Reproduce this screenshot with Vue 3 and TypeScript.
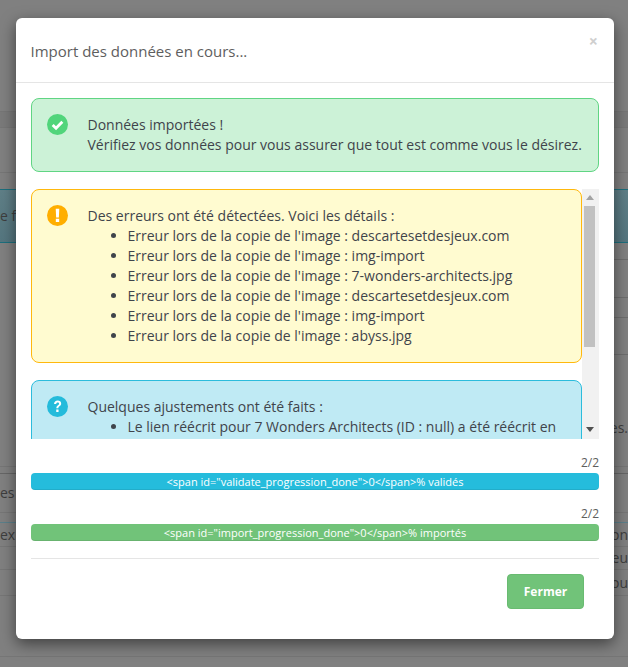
<script setup lang="ts">
interface BgRow {
  h: number
  kind?: string
  left?: string
  right?: string
}

const errors: string[] = [
  'descartesetdesjeux.com',
  'img-import',
  '7-wonders-architects.jpg',
  'descartesetdesjeux.com',
  'img-import',
  'abyss.jpg',
]

const rows: BgRow[] = [
  { h: 112 },
  { h: 16, kind: 'dark' },
  { h: 45 },
  { h: 16, kind: 'plain' },
  { h: 54, kind: 'band', left: 'e f' },
  { h: 17, kind: 'right-line' },
  { h: 38, kind: 'right-line' },
  { h: 20, kind: 'right-line' },
  { h: 37, kind: 'right-line' },
  { h: 112, kind: 'low', right: 'es.' },
  { h: 7, kind: 'heavy' },
  { h: 39, left: 'es e' },
  { h: 10, kind: 'teal' },
  { h: 24, left: 'ex', right: 'tion' },
  { h: 23, right: 'eu' },
  { h: 26, right: 'jou' },
  { h: 61 },
]
</script>

<template>
  <div class="page">
    <div class="backdrop">
      <div
        v-for="(row, i) in rows"
        :key="i"
        class="bg-row"
        :class="row.kind"
        :style="{ height: row.h + 'px' }"
      >
        <span>{{ row.left }}</span>
        <span>{{ row.right }}</span>
      </div>
    </div>
    <main class="modal">
      <header class="head">
        <h4>Import des données en cours...</h4>
        <span class="close">×</span>
      </header>
      <div class="body">
        <section class="alert success first">
          <svg class="icon" viewBox="0 0 20 20"><circle cx="10" cy="10" r="10" fill="#51d57b" /><path d="M5.4 10.4l3.2 3.2 6-6.2" fill="none" stroke="#fff" stroke-width="2.7" /></svg>
          <p>Données importées !<br />Vérifiez vos données pour vous assurer que tout est comme vous le désirez.</p>
        </section>
        <div class="scroll">
          <div class="scroll-content">
            <section class="alert warning">
              <svg class="icon" viewBox="0 0 20 20"><circle cx="10" cy="10" r="10" fill="#ffae00" /><path d="M8.3 3.6h3.4l-.4 8.2H8.7zM8.4 13.2h3.2v3.1H8.4z" fill="#fff" /></svg>
              <div class="copy">
                Des erreurs ont été détectées. Voici les détails :
                <ul>
                  <li v-for="(name, i) in errors" :key="i">Erreur lors de la copie de l'image : {{ name }}</li>
                </ul>
              </div>
            </section>
            <section class="alert info">
              <svg class="icon" viewBox="0 0 20 20"><circle cx="10" cy="10" r="10" fill="#24bbdb" /><path d="M6.7 7.6c.1-2 1.5-3.2 3.5-3.2 1.9 0 3.3 1.1 3.3 2.8 0 2.6-2.7 2.5-2.7 4.5H8.9c0-3 2.6-3 2.6-4.4 0-.7-.5-1.2-1.3-1.2-.9 0-1.4.6-1.5 1.5zM8.8 12.8h2.2v2.5H8.8z" fill="#fff" /></svg>
              <div class="copy">
                Quelques ajustements ont été faits :
                <ul>
                  <li>Le lien réécrit pour 7 Wonders Architects (ID : null) a été réécrit en</li>
                </ul>
              </div>
            </section>
          </div>
          <div class="track">
            <svg class="arrow" viewBox="0 0 8 5"><path d="M0 5L4 0l4 5z" fill="#a3a3a3" /></svg>
            <div class="thumb"></div>
            <svg class="arrow down" viewBox="0 0 8 5"><path d="M0 0h8L4 5z" fill="#505050" /></svg>
          </div>
        </div>
        <div class="progress-block">
          <div class="count">2/2</div>
          <div class="bar bar-blue">&lt;span id="validate_progression_done"&gt;0&lt;/span&gt;% validés</div>
        </div>
        <div class="progress-block">
          <div class="count">2/2</div>
          <div class="bar bar-green">&lt;span id="import_progression_done"&gt;0&lt;/span&gt;% importés</div>
        </div>
        <footer class="foot">
          <button type="button">Fermer</button>
        </footer>
      </div>
    </main>
  </div>
</template>

<style scoped>
.page {
  position: relative;
  width: 628px;
  height: 667px;
  overflow: hidden;
  background: #808080;
  font-family: "Open Sans", "Noto Sans", sans-serif;
  font-size: 14px;
  line-height: 20px;
  color: #3f444b;
}
.backdrop {
  display: flex;
  flex-direction: column;
  height: 667px;
  overflow: hidden;
  color: #3e3e3e;
  font-size: 14px;
}
.bg-row {
  flex: none;
  box-sizing: border-box;
  display: flex;
  justify-content: space-between;
  align-items: center;
  border-bottom: 1px solid #767676;
  white-space: nowrap;
}
.bg-row.dark {
  background: #7a7a7a;
}
.bg-row.plain {
  border-bottom: 0;
}
.bg-row.band {
  background: linear-gradient(#5f7f87, #55767f);
  border-top: 1px solid #1c6f7d;
  border-bottom: 1px solid #1c6f7d;
}
.bg-row.right-line {
  border-bottom: 0;
  background: linear-gradient(#6e6e6e, #6e6e6e) right bottom / 50% 1px no-repeat;
}
.bg-row.low {
  align-items: flex-end;
  padding-bottom: 28px;
}
.bg-row.heavy {
  border-bottom-color: #666;
}
.bg-row.teal {
  border-bottom-color: #5b7f8a;
}
.modal {
  position: absolute;
  left: 16px;
  top: 18px;
  width: 598px;
  height: 621px;
  box-sizing: border-box;
  background: #fff;
  border-radius: 6px;
  box-shadow: 0 5px 15px rgba(0, 0, 0, 0.5);
}
.head {
  position: relative;
  height: 65px;
  box-sizing: border-box;
  border-bottom: 1px solid #e5e5e5;
  padding: 21px 15px 0 14.5px;
}
.head h4 {
  margin: 0;
  font-size: 15px;
  font-weight: 400;
  line-height: 24px;
  color: #5e5e5e;
}
.close {
  position: absolute;
  right: 16px;
  top: 13px;
  font-size: 16px;
  font-weight: 700;
  color: #cfcfcf;
}
.body {
  padding: 15px 15px 0;
}
.alert {
  display: flex;
  box-sizing: border-box;
  border: 1px solid;
  border-radius: 8px;
  padding: 15px;
}
.alert p {
  margin: 0;
}
.first {
  height: 74px;
  margin-bottom: 17px;
}
.success {
  background: #ccf2d7;
  border-color: #60d583;
}
.warning {
  height: 174px;
  background: #fffbd0;
  border-color: #ffb80d;
  margin-bottom: 17px;
}
.info {
  background: #bfeaf4;
  border-color: #2cbcdc;
  height: 120px;
}
.icon {
  flex: none;
  width: 21px;
  height: 21px;
  margin-left: -0.5px;
  margin-right: 20px;
}
.alert p,
.copy {
  padding-top: 1px;
}
.copy ul {
  margin: 0;
  padding-left: 40px;
}
.scroll {
  display: flex;
  height: 250px;
  overflow: hidden;
}
.scroll-content {
  width: 551px;
  height: 250px;
  overflow: hidden;
}
.track {
  position: relative;
  width: 17px;
  height: 250px;
  background: #f1f1f1;
}
.arrow {
  position: absolute;
  left: 4px;
  top: 6px;
  width: 8px;
  height: 5px;
}
.arrow.down {
  top: auto;
  bottom: 7px;
}
.thumb {
  position: absolute;
  left: 2px;
  top: 17px;
  width: 11px;
  height: 141px;
  background: #c1c1c1;
}
.progress-block {
  margin-top: 14px;
  text-align: right;
}
.count {
  height: 20px;
  color: #5e5e5e;
  font-size: 12px;
  line-height: 20px;
}
.bar {
  height: 17px;
  box-sizing: border-box;
  border-radius: 4px;
  color: #fff;
  text-align: center;
  font-size: 11px;
  line-height: 17px;
  border-bottom: 1px solid rgba(0, 0, 0, 0.08);
}
.bar-blue { background: #25bcdc; }
.bar-green { background: #71c379; }
.foot {
  display: flex;
  justify-content: flex-end;
  margin-top: 17px;
  padding: 15px 15px 0 0;
  border-top: 1px solid #e5e5e5;
}
.foot button {
  width: 77px;
  height: 35px;
  padding: 0;
  border: 1px solid #69bb71;
  border-radius: 4px;
  background: #71c379;
  color: #fff;
  font: 700 12px/20px "Open Sans", sans-serif;
}
</style>
